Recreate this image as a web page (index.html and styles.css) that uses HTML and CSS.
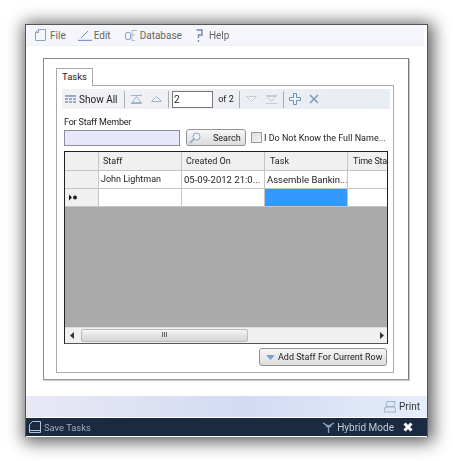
FILE: index.html
```html
<!DOCTYPE html>
<html lang="en">
<head>
    <meta charset="UTF-8">
    <title>Tasks</title>
    <link rel="stylesheet" href="styles.css">
</head>
<body>
    <div class="window">
        <div class="menubar">
            <span class="menu-item">
                <svg width="11" height="12" viewBox="0 0 11 12"><path d="M.5 3.500 3.500.5h7v11h-10zM.5 3.500h3v-3" fill="none" stroke="#8fa3c0"/></svg>
                File
            </span>
            <span class="menu-item item-edit">
                <svg width="14" height="11" viewBox="0 0 14 11"><path d="M3 8 10 1" stroke="#6f8bb5" fill="none"/><path d="M0 10.500h14" stroke="#7f9ac8" stroke-width="1.400"/></svg>
                Edit
            </span>
            <span class="menu-item item-db">
                <svg width="13" height="11" viewBox="0 0 13 11"><rect x=".5" y="2.500" width="5" height="7" rx="1.500" fill="none" stroke="#8fa3c0"/><path d="M7 .5h5M7 .5v10M7 5h3M7 10.500h3" stroke="#a9b8d0" fill="none"/></svg>
                Database
            </span>
            <span class="menu-item item-help">
                <svg width="7" height="13" viewBox="0 0 7 13"><path d="M.5 1h5.500v5h-3.500v3" stroke="#6f86a8" stroke-width="1.300" fill="none"/><path d="M2.500 11v2" stroke="#6f86a8" stroke-width="1.300"/></svg>
                Help
            </span>
        </div>

        <div class="content">
            <div class="group">
                <div class="tab">Tasks</div>
                <div class="tab-page">
                    <div class="toolbar">
                        <span class="tool show-all">
                            <svg width="11" height="8" viewBox="0 0 11 8"><path d="M0 1h11M0 4h3M4 4h3M8 4h3M0 7h3M4 7h3M8 7h3" stroke="#7a93b8" stroke-width="1.500"/></svg>
                            Show All
                        </span>
                        <span class="sep"></span>
                        <svg class="nav" width="11" height="9" viewBox="0 0 11 9"><path d="M0 .5h11M5.500 1.500 1 7.500h9zM0 8.500h11" fill="none" stroke="#9fb2cc"/></svg>
                        <svg class="nav nav-next" width="11" height="6" viewBox="0 0 11 6"><path d="M5.500 .5 .5 5.500h10z" fill="#f2f5fa" stroke="#9fb2cc"/></svg>
                        <span class="sep"></span>
                        <div class="page-input">2</div>
                        <span class="page-of">of 2</span>
                        <span class="sep"></span>
                        <svg class="nav" width="11" height="6" viewBox="0 0 11 6"><path d="M.5 .5h10l-5 5z" fill="#f2f5fa" stroke="#c3ccd8"/></svg>
                        <svg class="nav nav-next" width="11" height="9" viewBox="0 0 11 9"><path d="M0 .5h11M1 1.500h9l-4.500 5zM0 8.500h11" fill="none" stroke="#c3ccd8"/></svg>
                        <span class="sep"></span>
                        <svg class="nav-add" width="12" height="12" viewBox="0 0 12 12"><path d="M4.500 .5h3v4h4v3h-4v4h-3v-4h-4v-3h4z" fill="#eef3fa" stroke="#6d94c4"/></svg>
                        <svg class="nav-close" width="10" height="10" viewBox="0 0 10 10"><path d="M1 1l8 8M9 1l-8 8" stroke="#7f9cc4" stroke-width="1.700"/></svg>
                    </div>

                    <div class="field-label">For Staff Member</div>
                    <div class="search-row">
                        <div class="search-box"></div>
                        <div class="btn btn-search">
                            <svg width="12" height="12" viewBox="0 0 12 12"><circle cx="7.500" cy="4.500" r="3.500" fill="#eef3fa" stroke="#8ba6c8"/><path d="M5 7 1 11" stroke="#8ba6c8" stroke-width="1.600"/></svg>
                            <span>Search</span>
                        </div>
                        <label class="check"><span class="checkbox"></span>I Do Not Know the Full Name...</label>
                    </div>

                    <div class="grid">
                        <div class="grid-row head-row">
                            <div class="cell row-head"></div>
                            <div class="cell col-head">Staff</div>
                            <div class="cell col-head">Created On</div>
                            <div class="cell col-head col-task">Task</div>
                            <div class="cell col-head col-time last">Time Sta</div>
                        </div>
                        <div class="grid-row">
                            <div class="cell row-head"></div>
                            <div class="cell cell-name">John Lightman</div>
                            <div class="cell">05-09-2012 21:0...</div>
                            <div class="cell">Assemble Bankin...</div>
                            <div class="cell last"></div>
                        </div>
                        <div class="grid-row">
                            <div class="cell row-head marker">
                                <svg width="9" height="7" viewBox="0 0 9 7"><path d="M0 .5 3 3.500 0 6.500z" fill="#111"/><circle cx="6" cy="3.500" r="2" fill="#222"/></svg>
                            </div>
                            <div class="cell"></div>
                            <div class="cell"></div>
                            <div class="cell selected"></div>
                            <div class="cell last"></div>
                        </div>
                        <div class="grid-empty"></div>
                        <div class="hscroll">
                            <svg class="arrow" width="4" height="7" viewBox="0 0 4 7"><path d="M4 0v7L0 3.500z" fill="#333"/></svg>
                            <div class="thumb"><span class="grip">III</span></div>
                            <div class="track"></div>
                            <svg class="arrow" width="4" height="7" viewBox="0 0 4 7"><path d="M0 0v7l4-3.500z" fill="#333"/></svg>
                        </div>
                    </div>

                    <div class="btn-row">
                        <div class="btn btn-add">
                            <svg width="9" height="5" viewBox="0 0 9 5"><path d="M0 0h9L4.500 5z" fill="#7f9fcb"/></svg>
                            Add Staff For Current Row
                        </div>
                    </div>
                </div>
            </div>
        </div>

        <div class="print-band">
            <svg width="12" height="12" viewBox="0 0 12 12"><path d="M3 .5h8l-1 5H2zM1 6h10l1 5H0z" fill="#dfe7f5" stroke="#9fb2cc"/></svg>
            <span>Print</span>
        </div>

        <div class="statusbar">
            <span class="status-left">
                <svg width="12" height="12" viewBox="0 0 12 12"><path d="M.5 11.500v-8l3-3h8v11zM.5 9.500h11" fill="none" stroke="#b5c2d6"/></svg>
                Save Tasks
            </span>
            <span class="status-right">
                <svg width="11" height="11" viewBox="0 0 11 11"><path d="M5.500 4v7M0 1l5.500 3L11 1M2.500 4l3 1 3-1" fill="none" stroke="#8fa3c0" stroke-width="1.300"/></svg>
                Hybrid Mode
                <svg class="close" width="10" height="10" viewBox="0 0 10 10"><path d="M1.500 1.500l7 7M8.500 1.500l-7 7" stroke="#fff" stroke-width="3"/></svg>
            </span>
        </div>
    </div>
</body>
</html>
```

FILE: styles.css
```css
html, body {
    margin: 0;
    padding: 0;
    background-color: #fff;
}

body {
    font-family: Roboto, Arial, sans-serif;
    font-size: 10px;
    color: #222;
    padding: 24px 0 0 25px;
    height: 437px;
    overflow: hidden;
}

.window {
    width: 401px;
    height: 412px;
    background-color: #fff;
    border: 1px solid #555;
    border-bottom: none;
    display: flex;
    flex-direction: column;
    box-shadow: 2px 2px 16px 3px rgba(0, 0, 0, 0.65);
    filter: blur(0.35px);
}

.menubar {
    height: 20px;
    margin-right: 3px;
    background: #f4f6fc;
    border-bottom: 1px solid #eef0f4;
    display: flex;
    align-items: center;
    padding-left: 9px;
    color: #666;
}

.menu-item {
    display: flex;
    align-items: center;
    gap: 4px;
}

.item-edit {
    margin-left: 12px;
    gap: 2px;
}

.item-db {
    margin-left: 14px;
    gap: 2px;
}

.item-help {
    margin-left: 14px;
    gap: 6px;
}

.content {
    flex: 1;
    padding: 12px 17px 15px 17px;
}

.group {
    height: 322px;
    box-sizing: border-box;
    border: 1px solid #8a8a8a;
    border-right-color: #777;
    border-bottom-color: #999;
    width: 366px;
    padding: 9px 14px 8px 12px;
    box-shadow: 1px 1px 1px #ccc;
}

.tab {
    width: 37px;
    height: 18px;
    box-sizing: border-box;
    background: #fff;
    border: 1px solid #aaa;
    border-bottom: none;
    text-align: center;
    line-height: 16px;
    font-size: 9.500px;
    position: relative;
    z-index: 1;
    margin-bottom: -1px;
}

.tab-page {
    height: 288px;
    box-sizing: border-box;
    border: 1px solid #aaa;
    padding: 3px 3px 0 5px;
}

.toolbar {
    height: 20px;
    background: linear-gradient(to right, #f1f2f4, #e8ecf3);
    display: flex;
    align-items: center;
    padding-left: 3px;
}

.tool {
    display: flex;
    align-items: center;
    gap: 3px;
}

.sep {
    width: 1px;
    height: 17px;
    flex: none;
    background: #a9acb0;
}

.show-all {
    width: 59px;
    flex: none;
}

.nav {
    margin-left: 6px;
    flex: none;
}

.nav-next {
    margin-left: 9px;
    margin-right: 6px;
}

.nav-add {
    margin-left: 5px;
    flex: none;
}

.nav-close {
    margin-left: 8px;
    flex: none;
}

.page-input {
    width: 41px;
    height: 17px;
    box-sizing: border-box;
    margin-left: 3px;
    background: #fff;
    border: 1px solid #777;
    line-height: 15px;
    padding-left: 1px;
    flex: none;
}

.page-of {
    width: 26px;
    text-align: center;
    font-size: 9px;
    flex: none;
}

.field-label {
    margin: 7px 0 0 2px;
    height: 13px;
    line-height: 13px;
    font-size: 9px;
    letter-spacing: -0.2px;
}

.search-row {
    display: flex;
    align-items: center;
    height: 17px;
    margin: 0 0 0 2px;
}

.search-box {
    width: 116px;
    height: 16px;
    box-sizing: border-box;
    background: #e6e7f8;
    border: 1px solid #8e8e9a;
    flex: none;
}

.btn {
    display: flex;
    align-items: center;
    box-sizing: border-box;
    border: 1px solid #929292;
    border-radius: 3px;
    background: linear-gradient(to bottom, #f6f6f6, #dcdcdc);
    flex: none;
}

.btn-search {
    width: 60px;
    height: 17px;
    margin-left: 6px;
    padding-left: 2px;
    font-size: 9px;
}

.btn-search span {
    margin-left: 12px;
}

.check {
    display: flex;
    align-items: center;
    margin-left: 5px;
    gap: 2px;
    font-size: 9px;
    white-space: nowrap;
}

.checkbox {
    width: 9px;
    height: 9px;
    background: linear-gradient(to bottom right, #ddd, #f4f4f4);
    border: 1px solid #999;
}

.grid {
    width: 324px;
    height: 193px;
    box-sizing: border-box;
    margin: 5px 0 0 2px;
    border: 1px solid #222;
    border-bottom-color: #555;
    display: flex;
    flex-direction: column;
    background: #aaa;
    overflow: hidden;
}

.grid-row {
    display: grid;
    grid-template-columns: 34px 83px 83px 83px 1fr;
    height: 18px;
    flex: none;
    background: #fff;
}

.head-row {
    height: 19px;
}

.cell {
    box-sizing: border-box;
    border-right: 1px solid #c4c4c4;
    border-bottom: 1px solid #c4c4c4;
    padding-left: 2px;
    line-height: 17px;
    white-space: nowrap;
    overflow: hidden;
    font-size: 9.500px;
}

.cell.last {
    border-right: none;
}

.cell-name {
    font-size: 9px;
}

.col-head {
    background: #f0f0f0;
    padding-left: 4px;
    line-height: 18px;
    font-size: 9px;
}

.col-task {
    padding-left: 5px;
}

.col-time {
    padding-left: 5px;
    letter-spacing: -0.2px;
}

.row-head {
    background: #f0f0f0;
}

.marker {
    display: flex;
    align-items: center;
    padding-left: 4px;
}

.selected {
    background: #3399ff;
}

.grid-empty {
    flex: 1;
}

.hscroll {
    height: 15px;
    flex: none;
    display: flex;
    align-items: center;
    background: #f0f0f0;
    border-top: 1px solid #ddd;
    padding: 0 3px 0 5px;
}

.arrow {
    flex: none;
}

.thumb {
    width: 167px;
    height: 13px;
    margin-left: 7px;
    box-sizing: border-box;
    border: 1px solid #bbb;
    border-radius: 2px;
    background: linear-gradient(to bottom, #f4f4f4, #d4d4d4);
    text-align: center;
    font-size: 7px;
    line-height: 11px;
}

.track {
    flex: 1;
}

.btn-row {
    display: flex;
    justify-content: flex-end;
    margin-top: 4px;
    padding-right: 3px;
}

.btn-add {
    width: 128px;
    height: 18px;
    padding-left: 6px;
    gap: 3px;
    white-space: nowrap;
    font-size: 9px;
}

.print-band {
    height: 21px;
    flex: none;
    background: linear-gradient(to right, #e9e8f5, #d2dbf3 55%, #e6edfb);
    display: flex;
    align-items: center;
    justify-content: flex-end;
    gap: 3px;
    padding-right: 7px;
    color: #333;
}

.statusbar {
    height: 18px;
    flex: none;
    margin-top: 1px;
    background: #1a2a40;
    color: #c3ccd8;
    display: flex;
    align-items: center;
    justify-content: space-between;
    padding: 0 14px 0 3px;
    border-bottom: 1px solid #fff;
}

.status-left,
.status-right {
    display: flex;
    align-items: center;
    gap: 3px;
}

.status-left {
    color: #a3adbb;
    font-size: 9.400px;
}

.close {
    margin-left: 6px;
}
```
